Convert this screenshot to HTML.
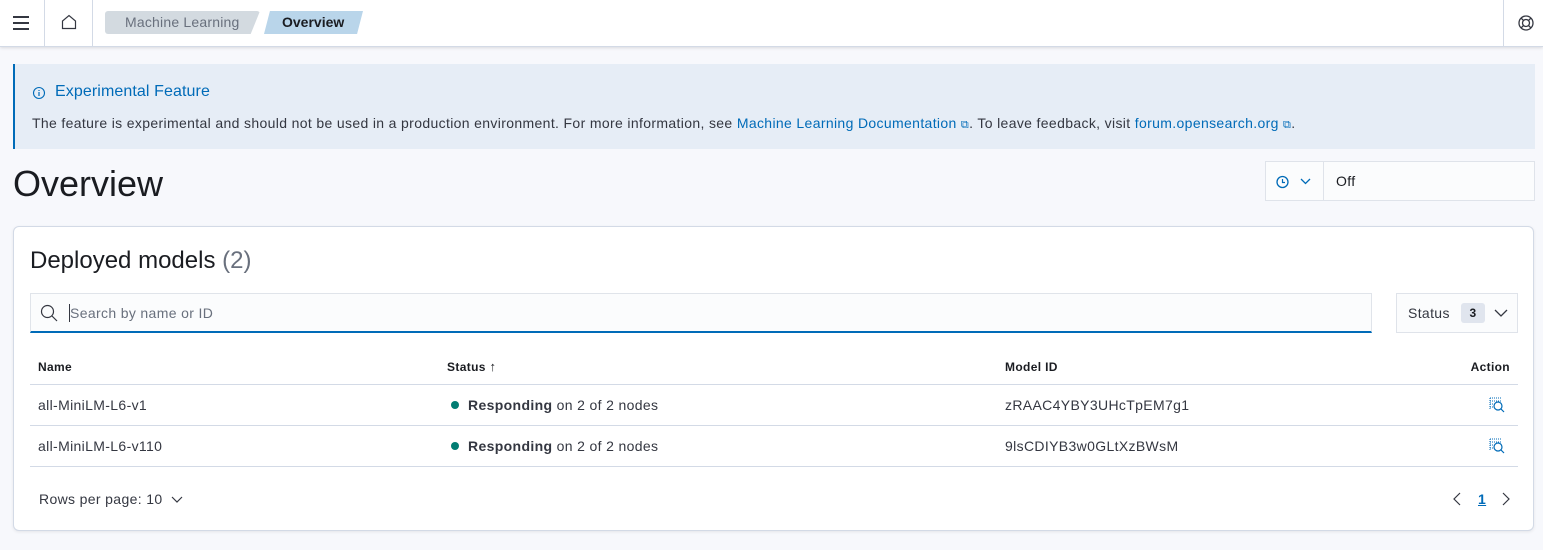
<!DOCTYPE html>
<html><head><style>
*{box-sizing:border-box;margin:0;padding:0}
body{width:1543px;height:550px;background:#f7f8fc;font-family:"Liberation Sans",sans-serif;color:#343741;position:relative;overflow:hidden;font-size:14px;letter-spacing:0.35px}
.abs{position:absolute}
.hdr{left:0;top:0;width:1543px;height:47px;background:#fff;border-bottom:1px solid #d3dae6;box-shadow:0 1px 3px rgba(0,0,0,.12)}
.sep{top:0;width:1px;height:47px;background:#d3dae6}
.bc{top:11px;height:23px;line-height:23px;font-size:14px;padding:0 20px;white-space:nowrap;letter-spacing:0.2px}
a{color:#006bb8;text-decoration:none}
.callout{left:13px;top:64px;width:1522px;height:85px;background:#e6edf6;border-left:2px solid #006bb8}
.panel{left:13px;top:226px;width:1521px;height:305px;background:#fff;border:1px solid #d3dae6;border-radius:6px;box-shadow:0 1px 3px rgba(0,0,0,.08)}
.row{left:30px;width:1488px;border-bottom:1px solid #d3dae6;height:41px}
.cell{position:absolute;top:0;line-height:40px;font-size:14px;white-space:nowrap}
.dot{display:inline-block;width:8px;height:8px;border-radius:50%;background:#017d73;margin-right:9px;vertical-align:1px}
</style></head><body>
<div class="abs hdr"></div>
<svg class="abs" style="left:12px;top:15px" width="18" height="16"><path d="M1 2h16M1 8h16M1 14h16" stroke="#343741" stroke-width="2"/></svg>
<div class="abs sep" style="left:44px"></div>
<svg class="abs" style="left:61px;top:14px" width="16" height="16"><path d="M1.5 14.5V7L8 1.5 14.5 7v7.5z" fill="none" stroke="#343741" stroke-width="1.2"/></svg>
<div class="abs sep" style="left:92px"></div>
<div class="abs bc" style="left:105px;width:155px;background:#d3dae0;color:#69707d;clip-path:polygon(0 0,100% 0,94% 100%,0 100%);border-radius:3px">Machine Learning</div>
<div class="abs bc" style="left:264px;width:99px;background:#b9d5ea;color:#1a1c21;clip-path:polygon(6% 0,100% 0,94% 100%,0 100%);font-weight:bold;padding-left:18px;letter-spacing:0">Overview</div>
<div class="abs sep" style="left:1503px"></div>
<svg class="abs" style="left:1518px;top:15px" width="16" height="16"><circle cx="8" cy="8" r="7" fill="none" stroke="#343741" stroke-width="1.3"/><circle cx="8" cy="8" r="3.5" fill="none" stroke="#343741" stroke-width="1.3"/><path d="M3 3l2.5 2.5M13 3l-2.5 2.5M3 13l2.5-2.5M13 13l-2.5-2.5" stroke="#343741" stroke-width="1.3"/></svg>

<div class="abs callout"></div>
<svg class="abs" style="left:32px;top:86px" width="14" height="14"><circle cx="7" cy="7" r="5.5" fill="none" stroke="#006bb8" stroke-width="1.1"/><path d="M7 6v4M7 4v1" stroke="#006bb8" stroke-width="1.2"/></svg>
<div class="abs" style="left:55px;top:83px;font-size:16px;color:#006bb8;letter-spacing:0.1px">Experimental Feature</div>
<div class="abs" style="left:32px;top:115px;font-size:14px;color:#343741;white-space:nowrap">The feature is experimental and should not be used in a production environment. For more information, see <a>Machine Learning Documentation</a> <span style="color:#006bb8;font-size:11px">⧉</span>. To leave feedback, visit <a>forum.opensearch.org</a> <span style="color:#006bb8;font-size:11px">⧉</span>.</div>

<div class="abs" style="left:13px;top:163px;font-size:36px;color:#1a1c21;letter-spacing:0">Overview</div>
<div class="abs" style="left:1265px;top:161px;width:270px;height:40px;background:#fbfcfd;border:1px solid #dfe3ea"></div>
<div class="abs" style="left:1323px;top:161px;width:1px;height:40px;background:#dfe3ea"></div>
<svg class="abs" style="left:1275px;top:174px" width="42" height="16"><circle cx="7.5" cy="8" r="5.5" fill="none" stroke="#006bb8" stroke-width="1.3"/><path d="M7.5 5v3.5h2.5" fill="none" stroke="#006bb8" stroke-width="1.2"/><path d="M26 5l4.5 4.5L35 5" fill="none" stroke="#006bb8" stroke-width="1.3"/></svg>
<div class="abs" style="left:1336px;top:173px;font-size:14px;color:#1a1c21">Off</div>

<div class="abs panel"></div>
<div class="abs" style="left:30px;top:247px;font-size:24px;color:#1a1c21;letter-spacing:0">Deployed models <span style="color:#69707d">(2)</span></div>
<div class="abs" style="left:30px;top:293px;width:1342px;height:40px;background:#fbfcfd;border:1px solid #e0e4ea;border-bottom:2px solid #006bb8"></div>
<svg class="abs" style="left:40px;top:304px" width="18" height="18"><circle cx="7.5" cy="7.5" r="6" fill="none" stroke="#343741" stroke-width="1.2"/><path d="M12 12l5 5" stroke="#343741" stroke-width="1.2"/></svg>
<div class="abs" style="left:69px;top:304px;width:1px;height:18px;background:#343741"></div>
<div class="abs" style="left:70px;top:305px;font-size:14px;color:#69707d">Search by name or ID</div>
<div class="abs" style="left:1396px;top:293px;width:122px;height:40px;background:#fbfcfd;border:1px solid #dfe3ea"></div>
<div class="abs" style="left:1408px;top:305px;font-size:14px;color:#343741">Status</div>
<div class="abs" style="left:1461px;top:303px;width:24px;height:20px;background:#e0e5ee;border-radius:3px;font-size:12px;font-weight:bold;text-align:center;line-height:20px;color:#1a1c21">3</div>
<svg class="abs" style="left:1494px;top:308px" width="14" height="10"><path d="M1 2l6 6 6-6" fill="none" stroke="#343741" stroke-width="1.3"/></svg>

<div class="abs row" style="top:344px">
<div class="cell" style="left:8px;font-size:12px;font-weight:bold;color:#1a1c21;top:3px">Name</div>
<div class="cell" style="left:417px;font-size:12px;font-weight:bold;color:#1a1c21;top:3px">Status <span style="font-weight:normal;font-size:13px">↑</span></div>
<div class="cell" style="left:975px;font-size:12px;font-weight:bold;color:#1a1c21;top:3px">Model ID</div>
<div class="cell" style="right:8px;font-size:12px;font-weight:bold;color:#1a1c21;top:3px">Action</div>
</div>
<div class="abs row" style="top:385px">
<div class="cell" style="left:8px">all-MiniLM-L6-v1</div>
<div class="cell" style="left:421px"><span class="dot"></span><b>Responding</b> on 2 of 2 nodes</div>
<div class="cell" style="left:975px">zRAAC4YBY3UHcTpEM7g1</div>
<svg class="cell" style="left:1459px;top:12px" width="16" height="16"><path d="M1 1h12M1 1v12M1 4h12M1 7h3M1 10h3" stroke="#006bb8" stroke-width="1" stroke-dasharray="1 1" fill="none"/><circle cx="9" cy="9" r="4" fill="none" stroke="#006bb8" stroke-width="1.2"/><path d="M12 12l3 3" stroke="#006bb8" stroke-width="1.2"/></svg>
</div>
<div class="abs row" style="top:426px">
<div class="cell" style="left:8px">all-MiniLM-L6-v110</div>
<div class="cell" style="left:421px"><span class="dot"></span><b>Responding</b> on 2 of 2 nodes</div>
<div class="cell" style="left:975px">9lsCDIYB3w0GLtXzBWsM</div>
<svg class="cell" style="left:1459px;top:12px" width="16" height="16"><path d="M1 1h12M1 1v12M1 4h12M1 7h3M1 10h3" stroke="#006bb8" stroke-width="1" stroke-dasharray="1 1" fill="none"/><circle cx="9" cy="9" r="4" fill="none" stroke="#006bb8" stroke-width="1.2"/><path d="M12 12l3 3" stroke="#006bb8" stroke-width="1.2"/></svg>
</div>

<div class="abs" style="left:39px;top:491px;font-size:14px;color:#343741;white-space:nowrap">Rows per page: 10 <svg width="12" height="8" style="margin-left:4px"><path d="M1 1l5 5 5-5" fill="none" stroke="#343741" stroke-width="1.2"/></svg></div>
<svg class="abs" style="left:1452px;top:492px" width="10" height="14"><path d="M8 1L2 7l6 6" fill="none" stroke="#343741" stroke-width="1.2"/></svg>
<div class="abs" style="left:1478px;top:491px;font-size:14px;font-weight:bold;color:#006bb8;text-decoration:underline">1</div>
<svg class="abs" style="left:1501px;top:492px" width="10" height="14"><path d="M2 1l6 6-6 6" fill="none" stroke="#343741" stroke-width="1.2"/></svg>
</body></html>
